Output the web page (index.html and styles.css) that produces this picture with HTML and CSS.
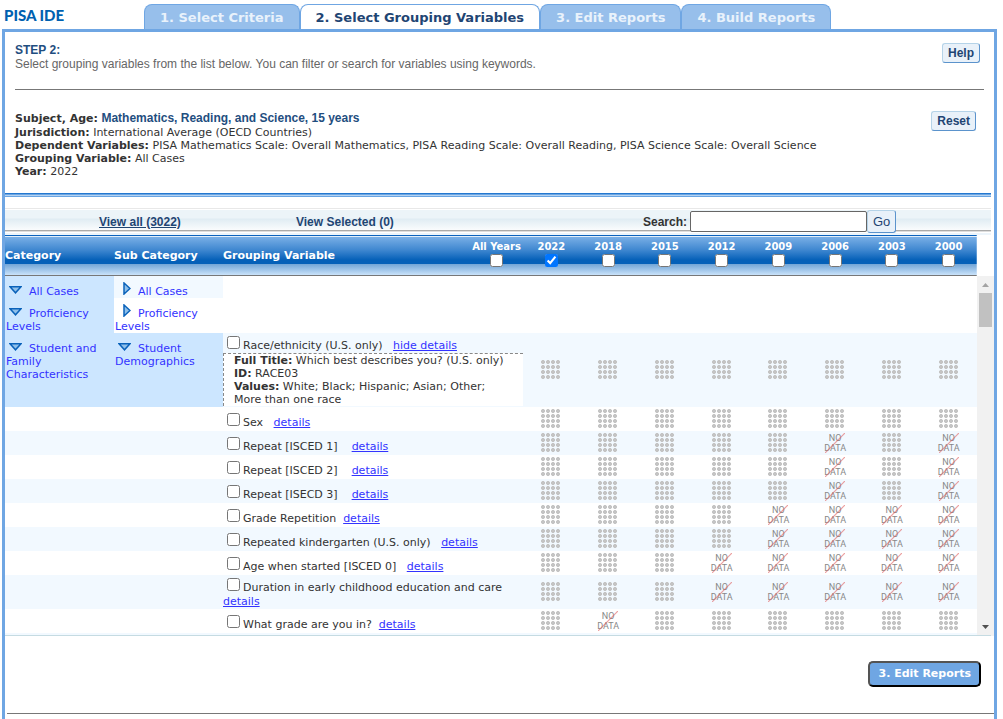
FILE: index.html
```html
<!DOCTYPE html>
<html lang="en">
<head>
<meta charset="utf-8">
<title>PISA IDE - Select Grouping Variables</title>
<link rel="stylesheet" href="styles.css">
</head>
<body>
<svg class="defs" aria-hidden="true">
  <symbol id="open" viewBox="0 0 13 8"><path d="M1 .8H12L6.500 6.800Z" fill="#8fc0ea" stroke="#0a62ba" stroke-width="1.500"/></symbol>
  <symbol id="closed" viewBox="0 0 8 13"><path d="M1 1V12L7 6.500Z" fill="#8fc0ea" stroke="#0a62ba" stroke-width="1.500"/></symbol>
</svg>
<header class="top">
  <div class="logo">PISA IDE</div>
  <nav class="tabs">
    <a href="#criteria">1. Select Criteria</a>
    <a href="#variables" class="current" aria-current="step">2. Select Grouping Variables</a>
    <a href="#edit">3. Edit Reports</a>
    <a href="#build">4. Build Reports</a>
  </nav>
</header>
<main class="panel">
  <section class="intro">
    <div>
      <h1>STEP 2:</h1>
      <p>Select grouping variables from the list below. You can filter or search for variables using keywords.</p>
    </div>
    <button type="button" class="btn">Help</button>
  </section>
  <section class="summary">
    <div>
      <p class="subject"><b>Subject, Age:</b> <strong>Mathematics, Reading, and Science, 15 years</strong></p>
      <p><b>Jurisdiction:</b> International Average (OECD Countries)</p>
      <p><b>Dependent Variables:</b> PISA Mathematics Scale: Overall Mathematics, PISA Reading Scale: Overall Reading, PISA Science Scale: Overall Science</p>
      <p><b>Grouping Variable:</b> All Cases</p>
      <p><b>Year:</b> 2022</p>
    </div>
    <button type="button" class="btn">Reset</button>
  </section>
  <div class="rule"></div>
  <form class="toolbar">
    <a href="#all" class="all">View all (3022)</a>
    <a href="#selected" class="selected">View Selected (0)</a>
    <label for="q">Search:</label>
    <input id="q" type="text">
    <button type="button" class="btn go">Go</button>
  </form>
  <div class="list">
    <div class="viewport">
      <table>
        <colgroup><col class="c-cat"><col class="c-cat"><col class="c-var"><col span="8"></colgroup>
        <thead>
          <tr>
            <th>Category</th><th>Sub Category</th>
            <th><div class="varhead"><span>Grouping Variable</span><label class="year">All Years<input type="checkbox"></label></div></th>
            <th><label class="year">2022<input type="checkbox" checked></label></th>
            <th><label class="year">2018<input type="checkbox"></label></th>
            <th><label class="year">2015<input type="checkbox"></label></th>
            <th><label class="year">2012<input type="checkbox"></label></th>
            <th><label class="year">2009<input type="checkbox"></label></th>
            <th><label class="year">2006<input type="checkbox"></label></th>
            <th><label class="year">2003<input type="checkbox"></label></th>
            <th><label class="year">2000<input type="checkbox"></label></th>
          </tr>
        </thead>
        <tbody>
          <tr>
            <td class="cat on"><a href="#c1"><svg class="down"><use href="#open"/></svg>All Cases</a></td>
            <td class="cat tint"><a href="#s1"><svg class="right"><use href="#closed"/></svg>All Cases</a></td>
            <td colspan="9"></td>
          </tr>
          <tr>
            <td class="cat on"><a href="#c2"><svg class="down"><use href="#open"/></svg>Proficiency Levels</a></td>
            <td class="cat"><a href="#s2"><svg class="right"><use href="#closed"/></svg>Proficiency Levels</a></td>
            <td colspan="9"></td>
          </tr>
          <tr class="tint">
            <td class="cat on"><a href="#c3"><svg class="down"><use href="#open"/></svg>Student and Family Characteristics</a></td>
            <td class="cat on"><a href="#s3"><svg class="down"><use href="#open"/></svg>Student Demographics</a></td>
            <td class="var open"><input type="checkbox" id="v1"><label for="v1">Race/ethnicity (U.S. only)</label>&nbsp;&nbsp; <a href="#d1">hide details</a>
              <div class="details">
                <p><b>Full Title:</b> Which best describes you? (U.S. only)</p>
                <p><b>ID:</b> RACE03</p>
                <p><b>Values:</b> White; Black; Hispanic; Asian; Other; More than one race</p>
              </div></td>
            <td><i class="dots"></i></td><td><i class="dots"></i></td><td><i class="dots"></i></td><td><i class="dots"></i></td><td><i class="dots"></i></td><td><i class="dots"></i></td><td><i class="dots"></i></td><td><i class="dots"></i></td>
          </tr>
          <tr>
            <td></td><td></td>
            <td class="var"><input type="checkbox" id="v2"><label for="v2">Sex</label>&nbsp;&nbsp; <a href="#d2">details</a></td>
            <td><i class="dots"></i></td><td><i class="dots"></i></td><td><i class="dots"></i></td><td><i class="dots"></i></td><td><i class="dots"></i></td><td><i class="dots"></i></td><td><i class="dots"></i></td><td><i class="dots"></i></td>
          </tr>
          <tr class="tint">
            <td></td><td></td>
            <td class="var"><input type="checkbox" id="v3"><label for="v3">Repeat [ISCED 1]</label>&nbsp;&nbsp;&nbsp; <a href="#d3">details</a></td>
            <td><i class="dots"></i></td><td><i class="dots"></i></td><td><i class="dots"></i></td><td><i class="dots"></i></td><td><i class="dots"></i></td><td><span class="nodata">NO<br>DATA</span></td><td><i class="dots"></i></td><td><span class="nodata">NO<br>DATA</span></td>
          </tr>
          <tr>
            <td></td><td></td>
            <td class="var"><input type="checkbox" id="v4"><label for="v4">Repeat [ISCED 2]</label>&nbsp;&nbsp;&nbsp; <a href="#d4">details</a></td>
            <td><i class="dots"></i></td><td><i class="dots"></i></td><td><i class="dots"></i></td><td><i class="dots"></i></td><td><i class="dots"></i></td><td><span class="nodata">NO<br>DATA</span></td><td><i class="dots"></i></td><td><span class="nodata">NO<br>DATA</span></td>
          </tr>
          <tr class="tint">
            <td></td><td></td>
            <td class="var"><input type="checkbox" id="v5"><label for="v5">Repeat [ISECD 3]</label>&nbsp;&nbsp;&nbsp; <a href="#d5">details</a></td>
            <td><i class="dots"></i></td><td><i class="dots"></i></td><td><i class="dots"></i></td><td><i class="dots"></i></td><td><i class="dots"></i></td><td><span class="nodata">NO<br>DATA</span></td><td><i class="dots"></i></td><td><span class="nodata">NO<br>DATA</span></td>
          </tr>
          <tr>
            <td></td><td></td>
            <td class="var"><input type="checkbox" id="v6"><label for="v6">Grade Repetition</label>&nbsp; <a href="#d6">details</a></td>
            <td><i class="dots"></i></td><td><i class="dots"></i></td><td><i class="dots"></i></td><td><i class="dots"></i></td><td><span class="nodata">NO<br>DATA</span></td><td><span class="nodata">NO<br>DATA</span></td><td><span class="nodata">NO<br>DATA</span></td><td><span class="nodata">NO<br>DATA</span></td>
          </tr>
          <tr class="tint">
            <td></td><td></td>
            <td class="var"><input type="checkbox" id="v7"><label for="v7">Repeated kindergarten (U.S. only)</label>&nbsp;&nbsp; <a href="#d7">details</a></td>
            <td><i class="dots"></i></td><td><i class="dots"></i></td><td><i class="dots"></i></td><td><i class="dots"></i></td><td><span class="nodata">NO<br>DATA</span></td><td><span class="nodata">NO<br>DATA</span></td><td><span class="nodata">NO<br>DATA</span></td><td><span class="nodata">NO<br>DATA</span></td>
          </tr>
          <tr>
            <td></td><td></td>
            <td class="var"><input type="checkbox" id="v8"><label for="v8">Age when started [ISCED 0]</label>&nbsp;&nbsp; <a href="#d8">details</a></td>
            <td><i class="dots"></i></td><td><i class="dots"></i></td><td><i class="dots"></i></td><td><span class="nodata">NO<br>DATA</span></td><td><span class="nodata">NO<br>DATA</span></td><td><span class="nodata">NO<br>DATA</span></td><td><span class="nodata">NO<br>DATA</span></td><td><span class="nodata">NO<br>DATA</span></td>
          </tr>
          <tr class="tint">
            <td></td><td></td>
            <td class="var open"><input type="checkbox" id="v9"><label for="v9">Duration in early childhood education and care</label>&nbsp; <a href="#d9">details</a></td>
            <td><i class="dots"></i></td><td><i class="dots"></i></td><td><i class="dots"></i></td><td><span class="nodata">NO<br>DATA</span></td><td><span class="nodata">NO<br>DATA</span></td><td><span class="nodata">NO<br>DATA</span></td><td><span class="nodata">NO<br>DATA</span></td><td><span class="nodata">NO<br>DATA</span></td>
          </tr>
          <tr>
            <td></td><td></td>
            <td class="var"><input type="checkbox" id="v10"><label for="v10">What grade are you in?</label>&nbsp; <a href="#d10">details</a></td>
            <td><i class="dots"></i></td><td><span class="nodata">NO<br>DATA</span></td><td><i class="dots"></i></td><td><i class="dots"></i></td><td><i class="dots"></i></td><td><i class="dots"></i></td><td><i class="dots"></i></td><td><i class="dots"></i></td>
          </tr>
          <tr class="tint"><td colspan="11"></td></tr>
        </tbody>
      </table>
    </div>
    <div class="scrollbar" aria-hidden="true">
      <svg viewBox="0 0 17 17"><path d="M5 11H12L8.500 7Z" fill="#a3a3a3"/></svg>
      <div class="thumb"></div>
      <svg viewBox="0 0 17 17"><path d="M5 6H12L8.500 10Z" fill="#505050"/></svg>
    </div>
  </div>
  <div class="actions"><button type="button" class="next">3. Edit Reports</button></div>
  <hr class="foot">
</main>
</body>
</html>
```
FILE: styles.css
```css
* { box-sizing: border-box; }
html, body { height: 100%; }
body {
  margin: 0;
  padding: 4px 6px 0 2px;
  display: flex;
  flex-direction: column;
  overflow: hidden;
  background: #fff;
  color: #333;
  font: 11px/13px Verdana, "DejaVu Sans", sans-serif;
}
p, h1 { margin: 0; }
.defs { position: absolute; width: 0; height: 0; }

.top { display: flex; height: 25px; flex: none; }
.logo {
  width: 142px;
  padding: 2px 0 0 2px;
  color: #0061b0;
  font: 900 15px/18px Lato, sans-serif;
}
.tabs { display: flex; }
.tabs a {
  padding: 0 15px;
  border: 1px solid #6fa6e3;
  border-bottom: 0;
  border-radius: 8px 8px 0 0;
  background: #97bfeb;
  color: #e9f2fb;
  font: bold 13px/25px Verdana, "DejaVu Sans", sans-serif;
  text-decoration: none;
  white-space: nowrap;
}
.tabs .current { background: #fff; color: #1f4573; }

.panel {
  flex: 1 0 auto;
  border: 3px solid #6fa6e3;
  border-bottom: 0;
}
.intro, .summary {
  display: flex;
  justify-content: space-between;
  align-items: flex-start;
}
.intro {
  height: 58px;
  margin: 0 10px;
  padding: 11px 4px 0 0;
  border-bottom: 1px solid #777;
  color: #666;
  font: 12px/14px "Liberation Sans", Arial, sans-serif;
}
h1 { color: #1f4e80; font-size: 12px; line-height: 14px; }
.summary { padding: 21px 18px 15px 10px; }
.subject { line-height: 15px; }
.subject strong { color: #1f4e80; font: bold 12px/15px "Liberation Sans", Arial, sans-serif; }
.btn {
  height: 20px;
  padding: 0 5px;
  border: 1px solid;
  border-color: #b5d3e8 #5b93cc #5b93cc #b5d3e8;
  border-radius: 3px;
  background: #e9f1f9;
  color: #1f4573;
  font: bold 12px/16px "Liberation Sans", Arial, sans-serif;
}
.rule {
  height: 4px;
  margin: 0 3px 11px 0;
  background: linear-gradient(#2478d0 1px, #6ba5e2 1px 2px, #b5d3f2 2px 3px, #6ba5e2 3px);
}
.toolbar {
  display: grid;
  grid-template-columns: 197px 1fr auto 177px 29px;
  align-items: center;
  height: 27px;
  margin-right: 3px;
  padding: 0 95px 0 94px;
  background: linear-gradient(#e8e8e8 1px, #fff 1px 2px, #ecf4f8 2px, #ecf4f8 10px, #e0ecf3 11px, #fafcfd 22px, #aaa 22px 23px, #ddd 23px 24px, #fff 24px 25px, #edf5fb 25px);
  font: bold 12px/14px "Liberation Sans", Arial, sans-serif;
}
.toolbar a { color: #1f4573; text-decoration: none; }
.toolbar .all { text-decoration: underline; }
.toolbar label { padding-right: 3px; }
.toolbar input {
  height: 21px;
  border: 1px solid #666;
  border-radius: 2px;
}
.toolbar .go { height: 23px; font-weight: normal; font-size: 13px; }

.list { display: flex; margin-bottom: 25px; position: relative; }
.list::after {
  content: "";
  position: absolute;
  inset: auto 3px 0 0;
  height: 1px;
  background: #c5dbe2;
}
.viewport { flex: 1; height: 401px; overflow: hidden; }
table { width: 100%; table-layout: fixed; border-collapse: collapse; }
.c-cat { width: 109px; }
.c-var { width: 300px; }
th, td { padding: 0; text-align: left; }
thead tr {
  height: 41px;
  color: #fff;
  background: linear-gradient(#0b62bd 1px, #e0eefb 1px 2px, #79afe6 2px, #3f87d0 15px, #0560b8 25px, #0560b8 29px, #72a5d6 29px, #c9e2fa 40px, #777 40px);
}
.varhead { display: flex; justify-content: space-between; align-items: center; padding-right: 2px; }
.year {
  display: flex;
  flex-direction: column;
  align-items: center;
  font-size: 10px;
  line-height: 12px;
  padding-bottom: 3px;
}
.year input { width: 13px; height: 13px; margin: 1px 0 0; }
.cat { padding: 9px 0 0 1px; vertical-align: top; }
.cat a { color: #33f; text-decoration: none; }
.down { width: 13px; height: 8px; margin: 0 7px 0 3px; vertical-align: 1px; }
.right { width: 8px; height: 13px; margin: -6px 7px 0 8px; vertical-align: 0; }
.tint { background: #f2f9ff; }
.on { background: #cce6ff; }
.var { line-height: 14px; padding: 3px 0 1px; }
.var.open { padding: 0; }
.var input { width: 13px; height: 13px; margin: 3px 3px 0 4px; }
.var a { color: #33f; }
.details {
  margin-bottom: 1px;
  padding: 0 14px 0 10px;
  border: 1px dashed #888;
  border-width: 1px 0 0 1px;
  background: #fff;
  line-height: 13px;
}
.dots {
  display: block;
  width: 20px;
  height: 20px;
  margin: 0 auto;
  background: radial-gradient(circle at 2px 2px, #c4c4c4 1.6px, transparent 2.3px) 0 0 / 5px 5px;
}
.nodata {
  display: block;
  position: relative;
  width: 22px;
  height: 20px;
  margin: 0 auto;
  color: #888;
  font: 9px/10px Roboto, sans-serif;
  text-align: center;
}
.nodata::after {
  content: "";
  position: absolute;
  inset: 0 1px;
  background: url("data:image/svg+xml,%3Csvg xmlns='http://www.w3.org/2000/svg' viewBox='0 0 20 20'%3E%3Cpath d='M0 20L20 0' stroke='%23e06060' stroke-opacity='.6' stroke-width='1.2'/%3E%3C/svg%3E") 0 0 / 20px 20px no-repeat;
}
tbody tr:last-child { height: 24px; }
.scrollbar {
  display: flex;
  flex-direction: column;
  width: 17px;
  margin-top: 41px;
  background: #f1f1f1;
}
.scrollbar svg { width: 17px; height: 17px; }
.scrollbar .thumb { height: 34px; margin: 0 2px auto; background: #c1c1c1; }

.actions { display: flex; justify-content: flex-end; padding: 0 13px 26px 0; }
.next {
  height: 26px;
  padding: 0 8px;
  border: 2px outset #000;
  border-radius: 5px;
  background: #6fa6e3;
  color: #fff;
  font: bold 11px/20px Verdana, "DejaVu Sans", sans-serif;
}
.foot { margin: 0 0 0 2px; border: 0; border-top: 1px solid #777; }
```
